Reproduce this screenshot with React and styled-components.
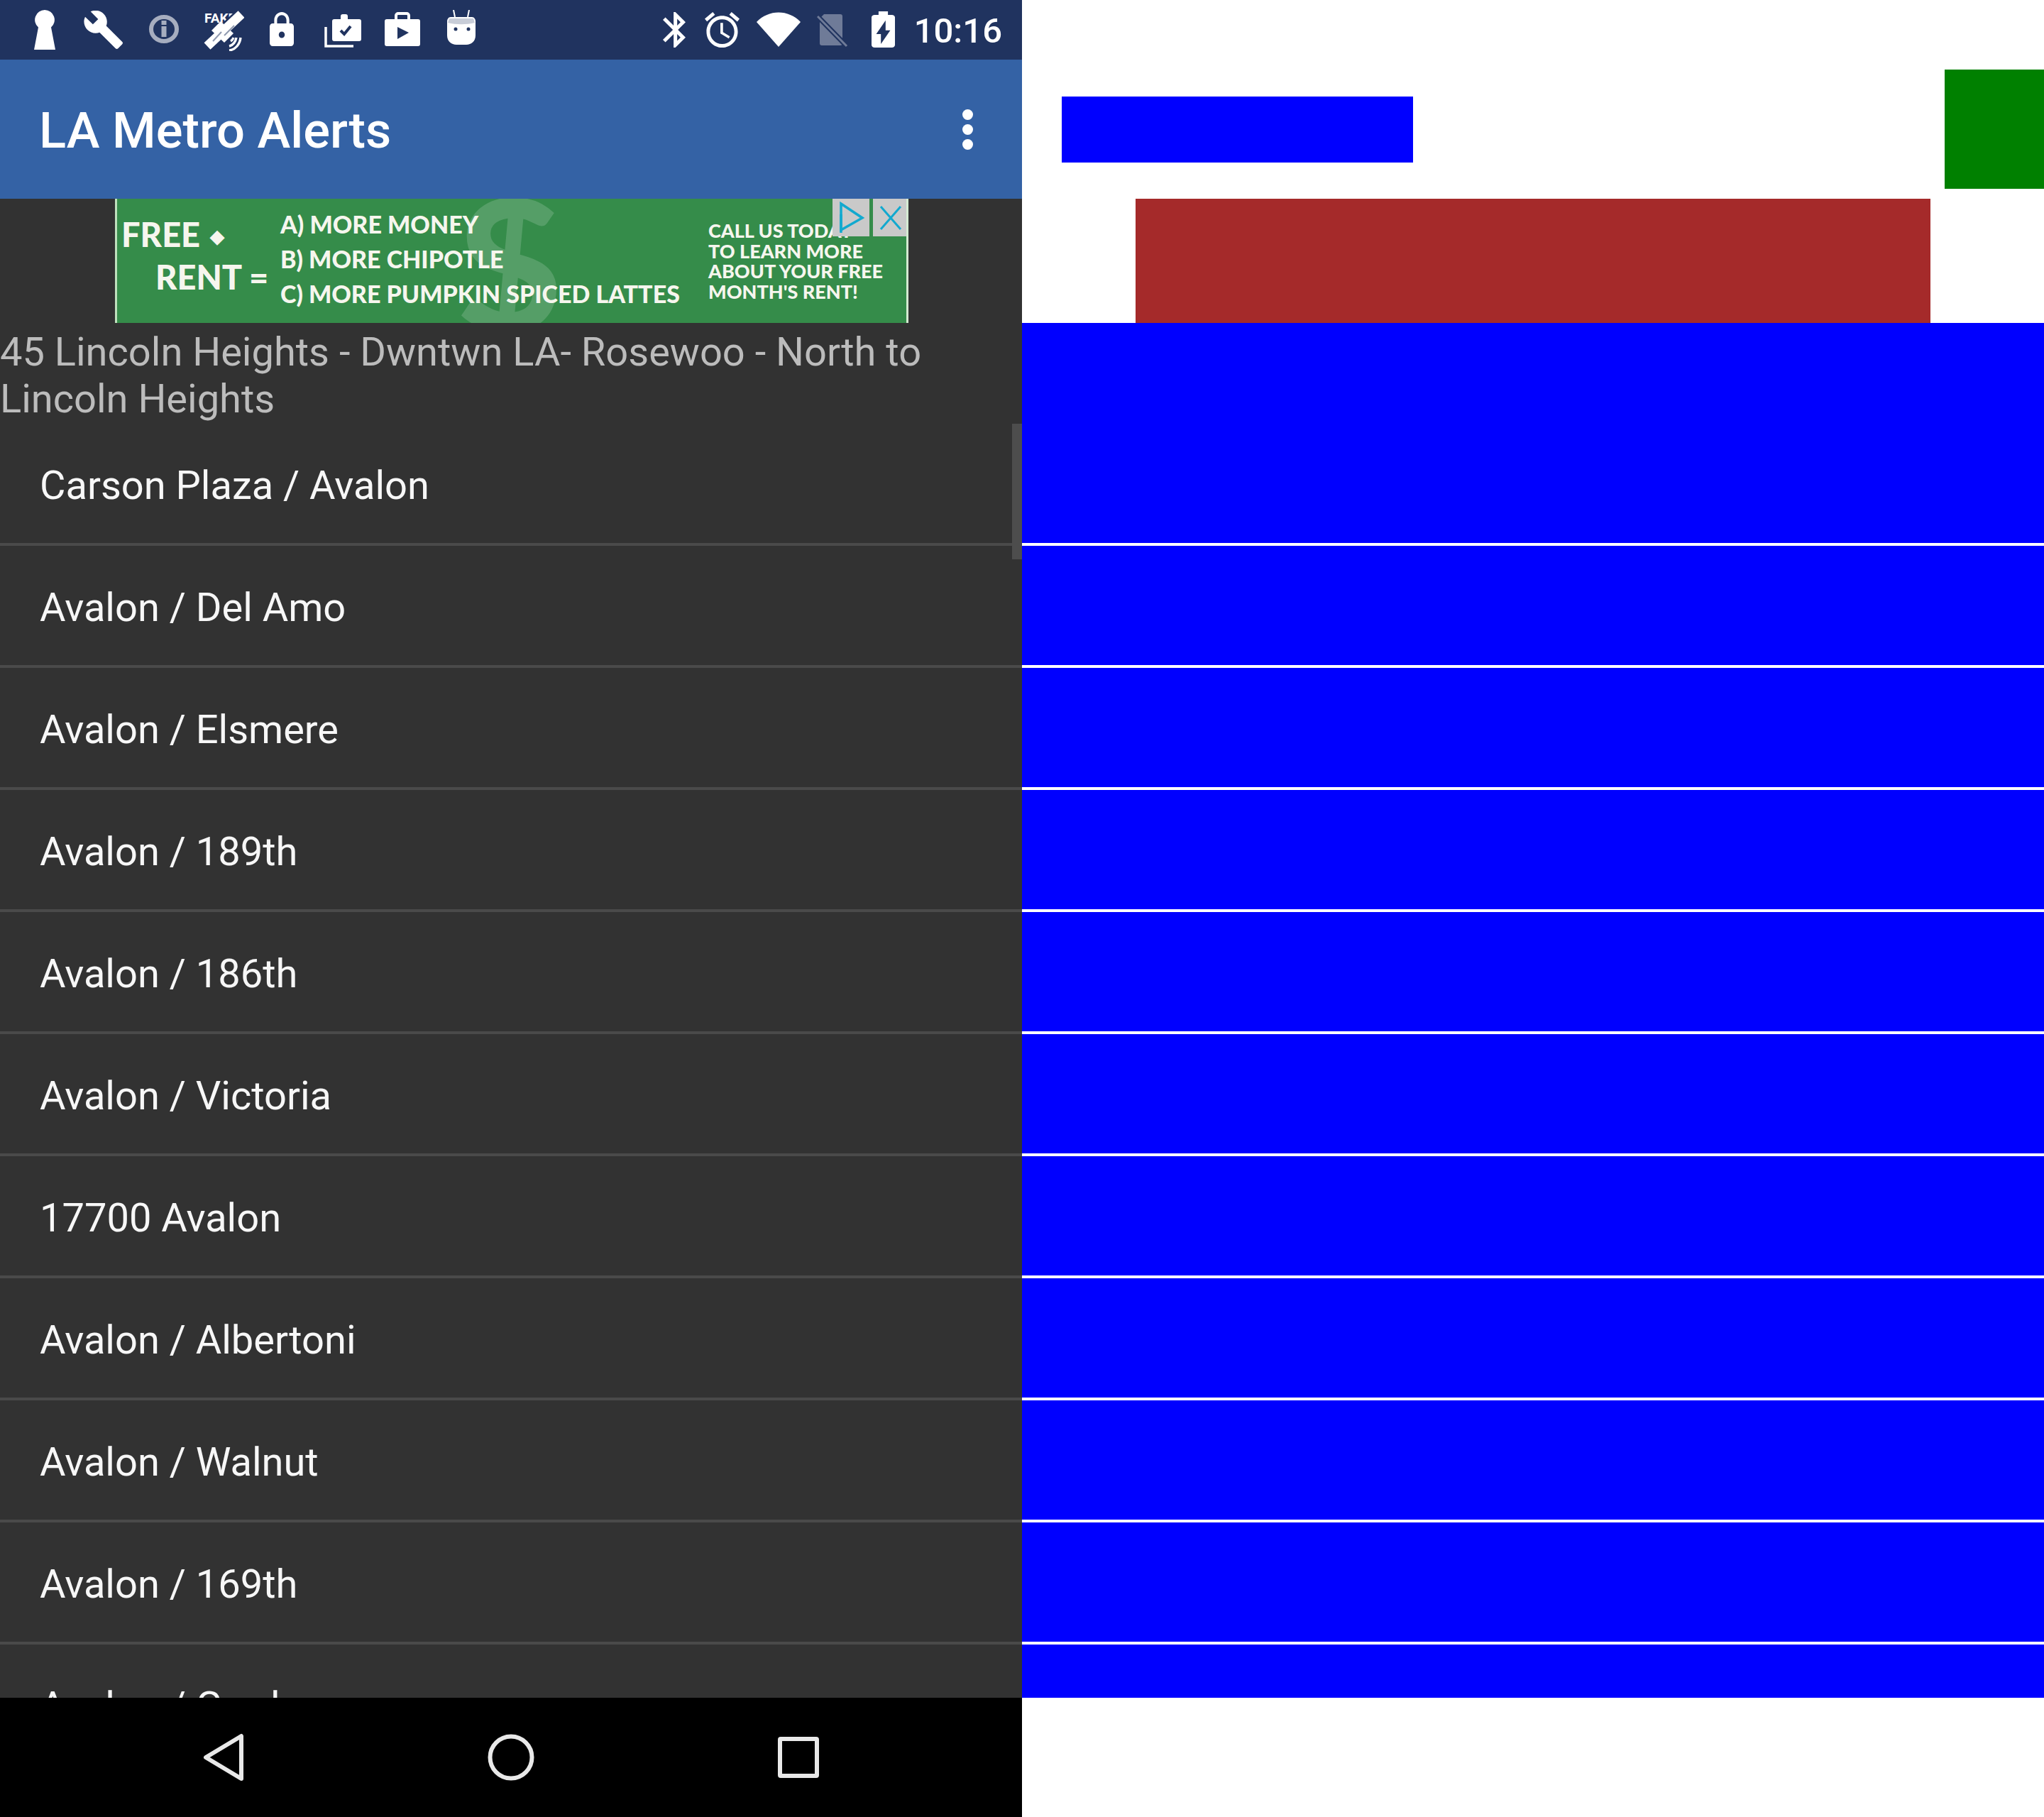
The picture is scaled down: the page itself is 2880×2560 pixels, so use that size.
import React from "react";
import styled, { createGlobalStyle } from "styled-components";

const Global = createGlobalStyle`
  html, body { margin: 0; padding: 0; background: #fff; }
  * { box-sizing: border-box; }
`;

const Page = styled.div`
  display: grid;
  grid-template-columns: 1440px 1440px;
  width: 2880px;
  height: 2560px;
  font-family: Roboto, "Liberation Sans", sans-serif;
`;

const Phone = styled.div`
  display: flex;
  flex-direction: column;
  height: 2560px;
  background: #323232;
`;

const StatusBar = styled.div`
  flex: none;
  height: 84px;
  display: flex;
  justify-content: space-between;
  background: #20335f;
  padding: 0 28px 0 48px;
`;

const StatusGroup = styled.div`
  display: flex;
  align-items: flex-start;
`;

const StatusIcon = styled.svg`
  flex: none;
  display: block;
  width: ${(p) => p.$w}px;
  height: ${(p) => p.$h}px;
  margin-left: ${(p) => p.$ml || 0}px;
  margin-top: ${(p) => p.$mt}px;
  fill: #fff;
`;

const Clock = styled.span`
  margin-left: 27px;
  margin-top: 14px;
  font-size: 49px;
  line-height: 60px;
  font-weight: 500;
  color: #fff;
`;

const AppBar = styled.div`
  flex: none;
  height: 196px;
  display: flex;
  align-items: center;
  justify-content: space-between;
  padding: 0 69px 0 55px;
  background: #3462a5;
`;

const AppTitle = styled.div`
  font-size: 70.5px;
  font-weight: 500;
  color: #fff;
  line-height: 80px;
  margin-top: 4px;
`;

const Overflow = styled.div`
  display: flex;
  flex-direction: column;
  gap: 6px;
`;

const Dot = styled.span`
  width: 15px;
  height: 15px;
  border-radius: 50%;
  background: #fff;
`;

const AdSlot = styled.div`
  flex: none;
  height: 175px;
  padding: 0 160px 0 162px;
`;

const Ad = styled.div`
  position: relative;
  height: 175px;
  overflow: hidden;
  display: flex;
  background: #358c4a;
  border-left: 3px solid #bfe0bd;
  border-right: 3px solid #d5ead2;
  font-family: Lato, "Liberation Sans", sans-serif;
  font-weight: 900;
  color: #f6f6ee;
`;

const AdDollar = styled.div`
  position: absolute;
  left: 478px;
  top: -48px;
  font-size: 258px;
  line-height: 270px;
  color: rgba(255, 255, 255, 0.16);
`;

const AdLeft = styled.div`
  position: relative;
  flex: none;
  width: 230px;
  padding: 21px 0 0 6px;
  font-size: 47px;
  line-height: 58px;
`;

const AdLeftLine = styled.div`
  white-space: nowrap;
  padding-left: ${(p) => p.$indent || 0}px;
`;

const AdDiamond = styled.span`
  font-size: 26px;
  vertical-align: 6px;
  margin-left: 14px;
`;

const AdMiddle = styled.div`
  position: relative;
  flex: none;
  width: 603px;
  padding-top: 11px;
  font-size: 34px;
  line-height: 49px;
`;

const AdLine = styled.div`
  white-space: nowrap;
`;

const AdRight = styled.div`
  position: relative;
  flex: none;
  padding-top: 31px;
  font-size: 27px;
  line-height: 28.7px;
`;

const AdBadges = styled.div`
  position: absolute;
  top: 0;
  right: -3px;
  display: flex;
  gap: 5px;
`;

const AdBadge = styled.div`
  width: ${(p) => p.$w}px;
  height: 53px;
  background: #c9c9c9;
  display: flex;
  align-items: center;
  justify-content: center;
`;

const Scroller = styled.div`
  position: relative;
  flex: 1;
  min-height: 0;
  overflow: hidden;
`;

const RouteTitle = styled.div`
  height: 142px;
  padding-top: 8px;
  font-size: 56px;
  line-height: 66px;
  color: #bcbcbc;
`;

const Row = styled.div`
  height: 172px;
  padding: 6px 0 0 56px;
  display: flex;
  align-items: center;
  font-size: 56px;
  color: #f7f7f7;
  border-bottom: 4px solid #4a4a4a;
`;

const ScrollThumb = styled.div`
  position: absolute;
  right: 0;
  top: 142px;
  width: 14px;
  height: 191px;
  background: #4d4d4d;
`;

const NavBar = styled.div`
  flex: none;
  height: 168px;
  background: #000;
  display: flex;
  justify-content: center;
  align-items: center;
`;

const NavCell = styled.div`
  width: 405px;
  display: flex;
  justify-content: center;
`;

const NavIcon = styled.svg`
  display: block;
  fill: none;
  stroke: #e9e9e9;
  stroke-width: 6;
  stroke-linejoin: round;
`;

const Mask = styled.div`
  display: flex;
  flex-direction: column;
  height: 2560px;
  background: #fff;
`;

const MaskHeader = styled.div`
  flex: none;
  height: 280px;
  padding: 84px 0 0 56px;
  display: flex;
  align-items: center;
  justify-content: space-between;
`;

const MaskTitle = styled.div`
  width: 495px;
  height: 93px;
  background: #0000ff;
`;

const MaskMenu = styled.div`
  width: 140px;
  height: 168px;
  background: #008000;
`;

const MaskAdSlot = styled.div`
  flex: none;
  height: 175px;
  padding: 0 160px;
`;

const MaskAd = styled.div`
  height: 100%;
  background: #a52a2a;
`;

const MaskList = styled.div`
  flex: none;
  height: 1937px;
  display: flex;
  flex-direction: column;
  background: #0000ff;
`;

const MaskRow = styled.div`
  flex: ${(p) => (p.$fill ? "1" : "none")};
  height: ${(p) => (p.$fill ? "auto" : `${p.$h}px`)};
  ${(p) => (p.$fill ? "" : "border-bottom: 4px solid #fff;")}
`;

const stops = [
  "Carson Plaza / Avalon",
  "Avalon / Del Amo",
  "Avalon / Elsmere",
  "Avalon / 189th",
  "Avalon / 186th",
  "Avalon / Victoria",
  "17700 Avalon",
  "Avalon / Albertoni",
  "Avalon / Walnut",
  "Avalon / 169th",
  "Avalon / Gardena",
];

const BG = "#20335f";

function LeftIcons() {
  return (
    <StatusGroup>
      <StatusIcon $w={30} $h={56} $mt={14} viewBox="0 0 30 56">
        <path d="M15 0a14 14 0 0 1 9 24.6L30 56H0L6 24.6A14 14 0 0 1 15 0z" />
      </StatusIcon>
      <StatusIcon $w={56} $h={54} $ml={40} $mt={15} viewBox="1 1.2 22.2 21.8">
        <path d="M22.7 19l-9.1-9.1c.9-2.3.4-5-1.5-6.9-2-2-5-2.4-7.4-1.3L9 6 6 9 1.6 4.7C.4 7.1.9 10.1 2.9 12.1c1.9 1.9 4.6 2.4 6.9 1.5l9.1 9.1c.4.4 1 .4 1.4 0l2.3-2.3c.5-.4.5-1.1.1-1.4z" />
      </StatusIcon>
      <StatusIcon $w={42} $h={40} $ml={36} $mt={21} viewBox="0 0 42 40" opacity="0.6">
        <ellipse cx="21" cy="20" rx="18" ry="17" fill="none" stroke="#fff" strokeWidth="6" />
        <rect x="17.5" y="16" width="7" height="15" />
        <rect x="17.5" y="8" width="7" height="6" />
      </StatusIcon>
      <StatusIcon $w={58} $h={57} $ml={34} $mt={15} viewBox="0 0 58 57">
        <text x="2" y="17" fontFamily="Roboto, sans-serif" fontWeight="700" fontSize="19" fill="#fff">FAKE</text>
        <path d="M54 5L6 50" stroke={BG} strokeWidth="18" fill="none" />
        <path d="M54 5L6 50" stroke="#fff" strokeWidth="13" fill="none" />
        <path d="M25 15l18 17-13 13-18-17z" />
        <path d="M23 15l4 4M42 32l-4 4" stroke={BG} strokeWidth="0" />
        <path d="M44 21L30 35" stroke={BG} strokeWidth="2" fill="none" opacity="0.5" />
        <path d="M26 30L14 43" stroke={BG} strokeWidth="2" fill="none" opacity="0.5" />
        <path d="M37 50c5-1 9-6 10-12M37 56c9-1 15-9 16-18M39 43c2-1 3-2 4-5" fill="none" stroke="#fff" strokeWidth="3.4" />
      </StatusIcon>
      <StatusIcon $w={34} $h={48} $ml={36} $mt={17} viewBox="4 1 16 21" preserveAspectRatio="none">
        <path d="M18 8h-1V6c0-2.76-2.24-5-5-5S7 3.24 7 6v2H6c-1.1 0-2 .9-2 2v10c0 1.1.9 2 2 2h12c1.1 0 2-.9 2-2V10c0-1.1-.9-2-2-2zm-6 9c-1.1 0-2-.9-2-2s.9-2 2-2 2 .9 2 2-.9 2-2 2zm3.1-9H8.9V6c0-1.71 1.39-3.1 3.1-3.1 1.71 0 3.1 1.39 3.1 3.1v2z" />
      </StatusIcon>
      <StatusIcon $w={52} $h={47} $ml={43} $mt={20} viewBox="0 0 52 47">
        <path d="M2 18v27h39" fill="none" stroke="#fff" strokeWidth="3.5" />
        <path d="M11 10a3 3 0 0 1 3-3h9V3a3 3 0 0 1 3-3h4a3 3 0 0 1 3 3v4h16a3 3 0 0 1 3 3v25a3 3 0 0 1-3 3H14a3 3 0 0 1-3-3z" />
        <path d="M23 23l5 5 9-11" fill="none" stroke={BG} strokeWidth="4" />
      </StatusIcon>
      <StatusIcon $w={50} $h={48} $ml={33} $mt={17} viewBox="0 0 50 48">
        <path d="M0 13a3 3 0 0 1 3-3h11V5a5 5 0 0 1 5-5h12a5 5 0 0 1 5 5v5h11a3 3 0 0 1 3 3v32a3 3 0 0 1-3 3H3a3 3 0 0 1-3-3zM18 10h14V5a1 1 0 0 0-1-1H19a1 1 0 0 0-1 1z" fillRule="evenodd" />
        <path d="M18 21l16 8-16 9z" fill={BG} />
      </StatusIcon>
      <StatusIcon $w={40} $h={49} $ml={38} $mt={14} viewBox="0 0 40 49">
        <path d="M9 0l2 10M31 0l-2 10" stroke="#fff" strokeWidth="2" fill="none" />
        <path d="M5 10h30c3 0 5 3 5 6v20c0 8-6 13-13 13H13C6 49 0 44 0 36V16c0-3 2-6 5-6z" />
        <path d="M3 12h34l2 6c-12 3-26 3-38 0z" fill="#c8cdd8" />
        <circle cx="12" cy="27" r="2.5" fill={BG} />
        <circle cx="30" cy="27" r="2.5" fill={BG} />
      </StatusIcon>
    </StatusGroup>
  );
}

function RightIcons() {
  return (
    <StatusGroup>
      <StatusIcon $w={32} $h={50} $mt={17} viewBox="5 2 12.7 20" preserveAspectRatio="none">
        <path d="M17.71 7.71L12 2h-1v7.59L6.41 5 5 6.41 10.59 12 5 17.59 6.41 19 11 14.41V22h1l5.71-5.71-4.3-4.29 4.3-4.29zM13 5.83l1.88 1.88L13 9.59V5.83zm1.88 10.46L13 18.17v-3.76l1.88 1.88z" />
      </StatusIcon>
      <StatusIcon $w={49} $h={50} $ml={27} $mt={17} viewBox="2 1.86 20 20.14" preserveAspectRatio="none">
        <path d="M22 5.72l-4.6-3.86-1.29 1.53 4.6 3.86L22 5.72zM7.88 3.39L6.6 1.86 2 5.71l1.29 1.53 4.59-3.85zM12.5 8H11v6l4.75 2.85.75-1.23-4-2.37V8zM12 4c-4.97 0-9 4.03-9 9s4.03 9 9 9c4.97 0 9-4.03 9-9s-4.03-9-9-9zm0 16c-3.87 0-7-3.13-7-7s3.13-7 7-7 7 3.13 7 7-3.13 7-7 7z" />
      </StatusIcon>
      <StatusIcon $w={62} $h={49} $ml={24} $mt={17} viewBox="0 0 62 49">
        <path d="M0 14C17-4 45-4 62 14L31 49z" />
      </StatusIcon>
      <StatusIcon $w={45} $h={47} $ml={23} $mt={20} viewBox="0 0 45 47">
        <path d="M10 0h23a3 3 0 0 1 3 3v38a3 3 0 0 1-3 3H7a3 3 0 0 1-3-3V6z" fill="#6f7b98" />
        <path d="M1 3l41 42" stroke={BG} strokeWidth="7" fill="none" />
        <path d="M1 3l41 42" stroke="#6f7b98" strokeWidth="3" fill="none" />
      </StatusIcon>
      <StatusIcon $w={33} $h={51} $ml={32} $mt={16} viewBox="7 2 10 20" preserveAspectRatio="none">
        <path d="M15.67 4H14V2h-4v2H8.33C7.6 4 7 4.6 7 5.33v15.33C7 21.4 7.6 22 8.33 22h7.33c.74 0 1.34-.6 1.34-1.33V5.33C17 4.6 16.4 4 15.67 4zM11 20v-5.5H9L13 7v5.5h2L11 20z" />
      </StatusIcon>
      <Clock>10:16</Clock>
    </StatusGroup>
  );
}

export default function App() {
  return (
    <>
      <Global />
      <Page>
        <Phone>
          <StatusBar>
            <LeftIcons />
            <RightIcons />
          </StatusBar>
          <AppBar>
            <AppTitle>LA Metro Alerts</AppTitle>
            <Overflow>
              <Dot />
              <Dot />
              <Dot />
            </Overflow>
          </AppBar>
          <AdSlot>
            <Ad>
              <AdDollar>$</AdDollar>
              <AdLeft>
                <AdLeftLine>
                  FREE<AdDiamond>◆</AdDiamond>
                </AdLeftLine>
                <AdLeftLine $indent={48}>RENT =</AdLeftLine>
              </AdLeft>
              <AdMiddle>
                <AdLine>A) MORE MONEY</AdLine>
                <AdLine>B) MORE CHIPOTLE</AdLine>
                <AdLine>C) MORE PUMPKIN SPICED LATTES</AdLine>
              </AdMiddle>
              <AdRight>
                <AdLine>CALL US TODAY</AdLine>
                <AdLine>TO LEARN MORE</AdLine>
                <AdLine>ABOUT YOUR FREE</AdLine>
                <AdLine>MONTH'S RENT!</AdLine>
              </AdRight>
              <AdBadges>
                <AdBadge $w={52}>
                  <svg width="40" height="46" viewBox="0 0 40 46" fill="none" stroke="#12a9cf" strokeWidth="3.5">
                    <path d="M6 3l30 20L6 40z" />
                    <path d="M6 18v26" />
                  </svg>
                </AdBadge>
                <AdBadge $w={50}>
                  <svg width="32" height="36" viewBox="0 0 32 36" fill="none" stroke="#12a9cf" strokeWidth="3">
                    <path d="M2 2l28 32M30 2L2 34" />
                  </svg>
                </AdBadge>
              </AdBadges>
            </Ad>
          </AdSlot>
          <Scroller>
            <RouteTitle>45 Lincoln Heights - Dwntwn LA- Rosewoo - North to Lincoln Heights</RouteTitle>
            {stops.map((s) => (
              <Row key={s}>{s}</Row>
            ))}
            <ScrollThumb />
          </Scroller>
          <NavBar>
            <NavCell>
              <NavIcon width="58" height="68" viewBox="0 0 58 68">
                <path d="M54 4v60L4 34z" />
              </NavIcon>
            </NavCell>
            <NavCell>
              <NavIcon width="66" height="66" viewBox="0 0 66 66">
                <circle cx="33" cy="33" r="29.5" />
              </NavIcon>
            </NavCell>
            <NavCell>
              <NavIcon width="58" height="58" viewBox="0 0 58 58">
                <rect x="3" y="3" width="52" height="52" rx="1" />
              </NavIcon>
            </NavCell>
          </NavBar>
        </Phone>
        <Mask>
          <MaskHeader>
            <MaskTitle />
            <MaskMenu />
          </MaskHeader>
          <MaskAdSlot>
            <MaskAd />
          </MaskAdSlot>
          <MaskList>
            <MaskRow $h={314} />
            {Array.from({ length: 9 }, (_, i) => (
              <MaskRow key={i} $h={172} />
            ))}
            <MaskRow $fill />
          </MaskList>
        </Mask>
      </Page>
    </>
  );
}
